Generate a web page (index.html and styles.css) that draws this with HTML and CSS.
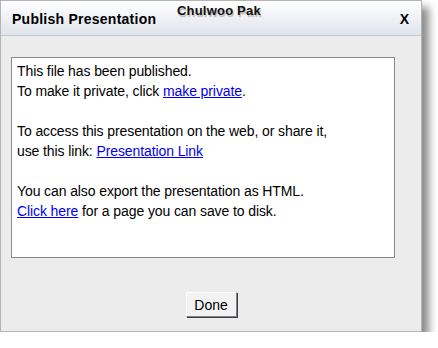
FILE: index.html
```html
<!DOCTYPE html>
<html lang="en">
<head>
  <meta charset="UTF-8">
  <title>Publish Presentation</title>
  <link rel="stylesheet" href="styles.css">
</head>
<body>
  <div class="dialog">
    <div class="dialog-header">
      <span class="dialog-title">Publish Presentation</span>
      <span class="user-name">Chulwoo Pak</span>
      <span class="close-btn">X</span>
    </div>
    <div class="dialog-body">
      <div class="message-box">
        <p>This file has been published.<br>To make it private, click <a href="#">make private</a>.</p>
        <p>To access this presentation on the web, or share it,<br>use this link: <a href="#">Presentation Link</a></p>
        <p>You can also export the presentation as HTML.<br><a href="#">Click here</a> for a page you can save to disk.</p>
      </div>
      <div class="dialog-actions">
        <button class="done-btn">Done</button>
      </div>
    </div>
  </div>
</body>
</html>
```

FILE: styles.css
```css
body {
  margin: 0;
  background-color: #fff;
  font-family: "Liberation Sans", Arial, sans-serif;
}
.dialog {
  width: 420px;
  height: 330px;
  border: 1px solid #b4b4b4;
  background-color: #ececec;
  box-shadow: 7px 7px 8px rgba(0, 0, 0, 0.45);
}
.dialog-header {
  position: relative;
  height: 34px;
  border-bottom: 1px solid #c4c8cf;
  background: linear-gradient(#ffffff, #dfe4ec);
  display: flex;
  align-items: center;
  padding: 0 12px 0 11px;
}
.dialog-title {
  font-weight: bold;
  font-size: 14px;
  letter-spacing: 0.25px;
  color: #000;
  flex: 1;
  padding-top: 1px;
}
.user-name {
  position: absolute;
  left: 176px;
  top: 2px;
  font-weight: bold;
  font-size: 13px;
  letter-spacing: 0.2px;
  color: #111;
  text-shadow: 1px 2px 1px #b8b8b8;
}
.close-btn {
  font-weight: bold;
  font-size: 14px;
  color: #000;
  padding-top: 2px;
}
.dialog-body {
  padding: 21px 26px 0 10px;
}
.message-box {
  height: 196px;
  border: 1px solid #8a8a8a;
  background-color: #fff;
  padding: 3px 5px 0 5px;
  font-size: 14px;
  letter-spacing: -0.1px;
  line-height: 20px;
  color: #000;
}
.message-box p {
  margin: 0 0 20px 0;
}
.message-box a {
  color: #0000ee;
}
.dialog-actions {
  display: flex;
  justify-content: center;
  padding: 34px 0 0 16px;
}
.done-btn {
  width: 51px;
  height: 25px;
  font-family: "Liberation Sans", Arial, sans-serif;
  font-size: 14px;
  color: #000;
  background-color: #f2f2f2;
  border: 1px solid;
  border-color: #fff #808080 #808080 #fff;
  box-shadow: 1px 1px 0 #404040;
  padding: 0;
}
```
